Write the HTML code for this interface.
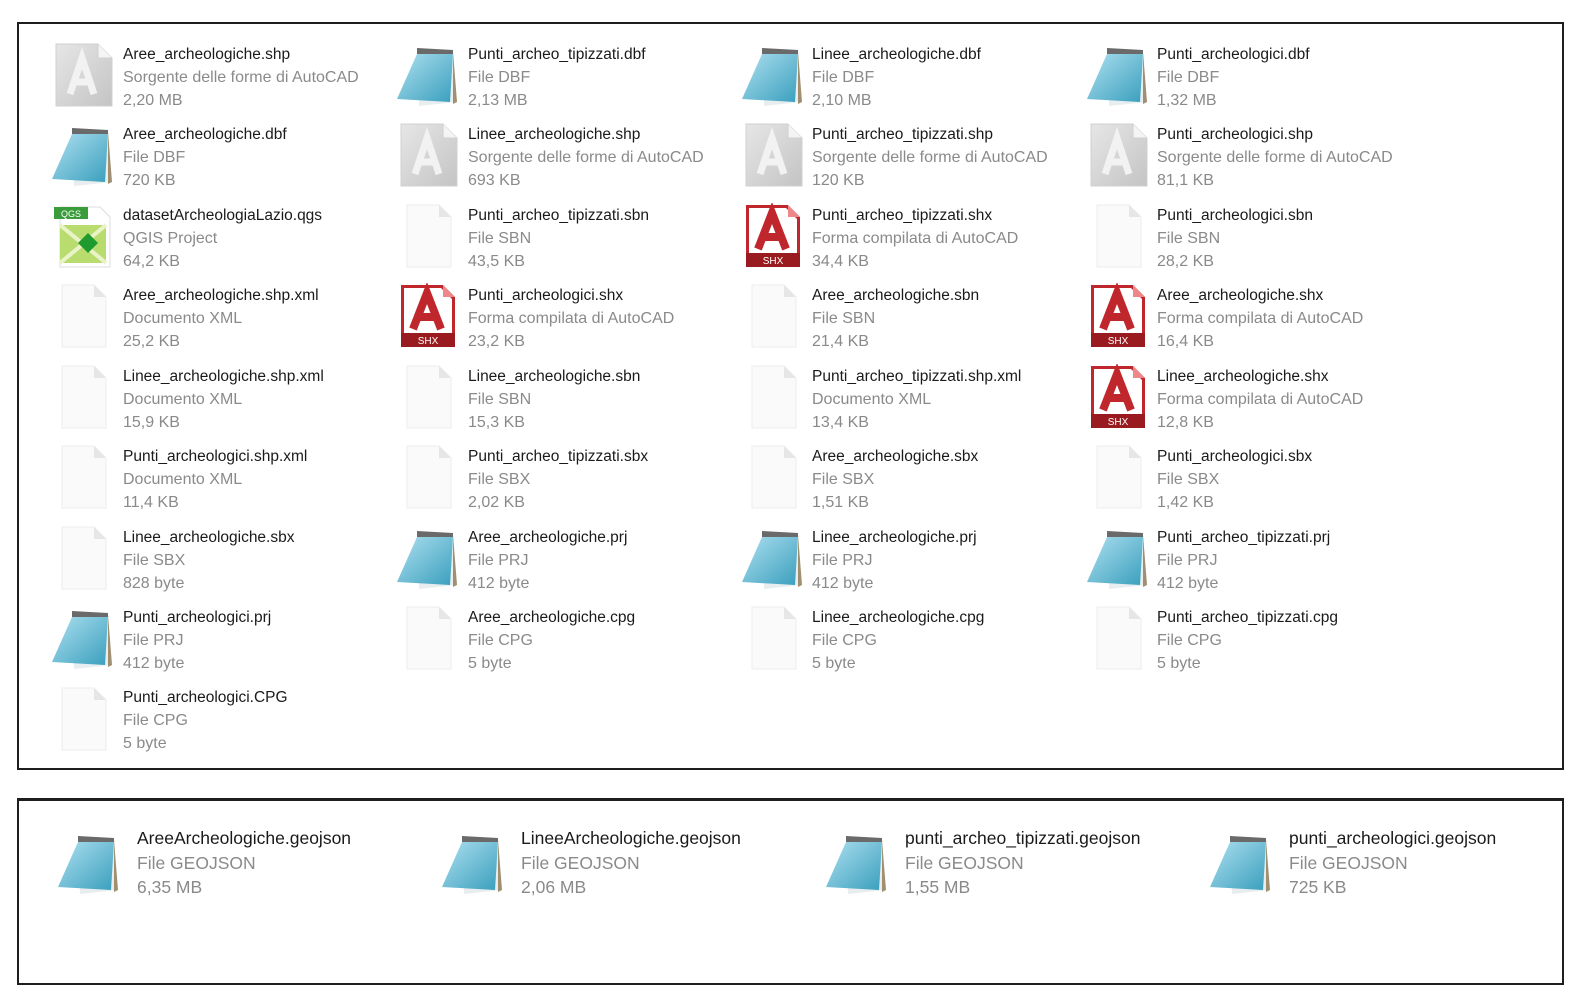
<!DOCTYPE html>
<html><head><meta charset="utf-8"><style>
body{margin:0;width:1591px;height:999px;background:#fff;position:relative;overflow:hidden;font-family:"Liberation Sans",sans-serif}
.box{position:absolute;border:2px solid #1e1e1e}
.c{position:absolute;font-size:16px;line-height:23px;white-space:nowrap;letter-spacing:0px}
.c b{font-weight:normal;color:#1a1a1a;display:block;font-size:15.5px}
.c i{font-style:normal;color:#8a8a8a;display:block}
.g .c{font-size:17.5px;line-height:24.5px}
.g .c b{font-size:17.5px}
svg.ic{position:absolute;width:64px;height:66px}
</style></head><body>
<svg width="0" height="0" style="position:absolute">
<defs>
<linearGradient id="bl" x1="0" y1="0" x2="1" y2="1"><stop offset="0" stop-color="#aee0f0"/><stop offset="1" stop-color="#3a9fbd"/></linearGradient>
<linearGradient id="gr" x1="0" y1="0" x2="1" y2="1"><stop offset="0" stop-color="#e6e6e6"/><stop offset="1" stop-color="#c4c4c4"/></linearGradient>
<symbol id="np" viewBox="0 0 64 66"><path d="M24 8 L58 10 L62 60 L24 64 Z" fill="#e8eef0"/><path d="M58 10 L62 60 L58 62 Z" fill="#a08f70"/><path d="M22 12 L58 12 L55 60 L2 57 Z" fill="url(#bl)"/><path d="M22 6 L58 8 L58 12 L22 12 Z" fill="#6a6a6a"/></symbol>
<symbol id="sh" viewBox="0 0 64 66"><path d="M6 2 H48 L62 16 V64 H6 Z" fill="url(#gr)" stroke="#d0d0d0"/><path d="M48 2 V16 H62" fill="#f4f4f4" stroke="#d0d0d0"/><path d="M20 52 L32 16 L44 52 M24 40 H40" stroke="#f2f2f2" stroke-width="7" fill="none"/></symbol>
<symbol id="bk" viewBox="0 0 64 66"><path d="M12 2 H44 L56 14 V64 H12 Z" fill="#fafafa" stroke="#ececec"/><path d="M44 2 V14 H56" fill="#e6e6e6"/></symbol>
<symbol id="sx" viewBox="0 0 64 66"><path d="M6 2 H48 L60 14 V64 H6 Z" fill="#c0272d"/><path d="M9 5 H46 L57 16 V50 H9 Z" fill="#fff"/><path d="M48 2 V14 H60" fill="#e88"/><path d="M18 46 L32 10 L46 46 M23 34 H41" stroke="#c0272d" stroke-width="8" fill="none"/><rect x="6" y="50" width="54" height="14" fill="#9a1b1f"/><text x="33" y="61" font-size="10" fill="#fff" text-anchor="middle" font-family="Liberation Sans">SHX</text></symbol>
<symbol id="qg" viewBox="0 0 64 66"><path d="M10 4 H50 L60 14 V64 H10 Z" fill="#fff" stroke="#ddd"/><rect x="10" y="22" width="46" height="38" fill="#b9dc6e"/><path d="M10 22 L56 60 M56 22 L10 60" stroke="#e8f4c8" stroke-width="4"/><path d="M38 30 L48 40 L38 50 L28 40Z" fill="#1f9a2e"/><rect x="4" y="4" width="34" height="12" fill="#3a9c3a"/><text x="21" y="14" font-size="9" fill="#fff" text-anchor="middle" font-family="Liberation Sans">QGS</text></symbol>
</defs></svg>

<div class="box" style="left:17px;top:22px;width:1543px;height:744px"></div>
<div class="box" style="left:17px;top:798px;width:1543px;height:182px;border-top-width:3px"></div>

<svg class="ic" style="left:50px;top:42px"><use href="#sh"/></svg><div class="c" style="left:123px;top:43px"><b>Aree_archeologiche.shp</b><i>Sorgente delle forme di AutoCAD</i><i>2,20 MB</i></div>
<svg class="ic" style="left:395px;top:42px"><use href="#np"/></svg><div class="c" style="left:468px;top:43px"><b>Punti_archeo_tipizzati.dbf</b><i>File DBF</i><i>2,13 MB</i></div>
<svg class="ic" style="left:740px;top:42px"><use href="#np"/></svg><div class="c" style="left:812px;top:43px"><b>Linee_archeologiche.dbf</b><i>File DBF</i><i>2,10 MB</i></div>
<svg class="ic" style="left:1085px;top:42px"><use href="#np"/></svg><div class="c" style="left:1157px;top:43px"><b>Punti_archeologici.dbf</b><i>File DBF</i><i>1,32 MB</i></div>

<svg class="ic" style="left:50px;top:122px"><use href="#np"/></svg><div class="c" style="left:123px;top:123px"><b>Aree_archeologiche.dbf</b><i>File DBF</i><i>720 KB</i></div>
<svg class="ic" style="left:395px;top:122px"><use href="#sh"/></svg><div class="c" style="left:468px;top:123px"><b>Linee_archeologiche.shp</b><i>Sorgente delle forme di AutoCAD</i><i>693 KB</i></div>
<svg class="ic" style="left:740px;top:122px"><use href="#sh"/></svg><div class="c" style="left:812px;top:123px"><b>Punti_archeo_tipizzati.shp</b><i>Sorgente delle forme di AutoCAD</i><i>120 KB</i></div>
<svg class="ic" style="left:1085px;top:122px"><use href="#sh"/></svg><div class="c" style="left:1157px;top:123px"><b>Punti_archeologici.shp</b><i>Sorgente delle forme di AutoCAD</i><i>81,1 KB</i></div>

<svg class="ic" style="left:50px;top:203px"><use href="#qg"/></svg><div class="c" style="left:123px;top:204px"><b>datasetArcheologiaLazio.qgs</b><i>QGIS Project</i><i>64,2 KB</i></div>
<svg class="ic" style="left:395px;top:203px"><use href="#bk"/></svg><div class="c" style="left:468px;top:204px"><b>Punti_archeo_tipizzati.sbn</b><i>File SBN</i><i>43,5 KB</i></div>
<svg class="ic" style="left:740px;top:203px"><use href="#sx"/></svg><div class="c" style="left:812px;top:204px"><b>Punti_archeo_tipizzati.shx</b><i>Forma compilata di AutoCAD</i><i>34,4 KB</i></div>
<svg class="ic" style="left:1085px;top:203px"><use href="#bk"/></svg><div class="c" style="left:1157px;top:204px"><b>Punti_archeologici.sbn</b><i>File SBN</i><i>28,2 KB</i></div>

<svg class="ic" style="left:50px;top:283px"><use href="#bk"/></svg><div class="c" style="left:123px;top:284px"><b>Aree_archeologiche.shp.xml</b><i>Documento XML</i><i>25,2 KB</i></div>
<svg class="ic" style="left:395px;top:283px"><use href="#sx"/></svg><div class="c" style="left:468px;top:284px"><b>Punti_archeologici.shx</b><i>Forma compilata di AutoCAD</i><i>23,2 KB</i></div>
<svg class="ic" style="left:740px;top:283px"><use href="#bk"/></svg><div class="c" style="left:812px;top:284px"><b>Aree_archeologiche.sbn</b><i>File SBN</i><i>21,4 KB</i></div>
<svg class="ic" style="left:1085px;top:283px"><use href="#sx"/></svg><div class="c" style="left:1157px;top:284px"><b>Aree_archeologiche.shx</b><i>Forma compilata di AutoCAD</i><i>16,4 KB</i></div>

<svg class="ic" style="left:50px;top:364px"><use href="#bk"/></svg><div class="c" style="left:123px;top:365px"><b>Linee_archeologiche.shp.xml</b><i>Documento XML</i><i>15,9 KB</i></div>
<svg class="ic" style="left:395px;top:364px"><use href="#bk"/></svg><div class="c" style="left:468px;top:365px"><b>Linee_archeologiche.sbn</b><i>File SBN</i><i>15,3 KB</i></div>
<svg class="ic" style="left:740px;top:364px"><use href="#bk"/></svg><div class="c" style="left:812px;top:365px"><b>Punti_archeo_tipizzati.shp.xml</b><i>Documento XML</i><i>13,4 KB</i></div>
<svg class="ic" style="left:1085px;top:364px"><use href="#sx"/></svg><div class="c" style="left:1157px;top:365px"><b>Linee_archeologiche.shx</b><i>Forma compilata di AutoCAD</i><i>12,8 KB</i></div>

<svg class="ic" style="left:50px;top:444px"><use href="#bk"/></svg><div class="c" style="left:123px;top:445px"><b>Punti_archeologici.shp.xml</b><i>Documento XML</i><i>11,4 KB</i></div>
<svg class="ic" style="left:395px;top:444px"><use href="#bk"/></svg><div class="c" style="left:468px;top:445px"><b>Punti_archeo_tipizzati.sbx</b><i>File SBX</i><i>2,02 KB</i></div>
<svg class="ic" style="left:740px;top:444px"><use href="#bk"/></svg><div class="c" style="left:812px;top:445px"><b>Aree_archeologiche.sbx</b><i>File SBX</i><i>1,51 KB</i></div>
<svg class="ic" style="left:1085px;top:444px"><use href="#bk"/></svg><div class="c" style="left:1157px;top:445px"><b>Punti_archeologici.sbx</b><i>File SBX</i><i>1,42 KB</i></div>

<svg class="ic" style="left:50px;top:525px"><use href="#bk"/></svg><div class="c" style="left:123px;top:526px"><b>Linee_archeologiche.sbx</b><i>File SBX</i><i>828 byte</i></div>
<svg class="ic" style="left:395px;top:525px"><use href="#np"/></svg><div class="c" style="left:468px;top:526px"><b>Aree_archeologiche.prj</b><i>File PRJ</i><i>412 byte</i></div>
<svg class="ic" style="left:740px;top:525px"><use href="#np"/></svg><div class="c" style="left:812px;top:526px"><b>Linee_archeologiche.prj</b><i>File PRJ</i><i>412 byte</i></div>
<svg class="ic" style="left:1085px;top:525px"><use href="#np"/></svg><div class="c" style="left:1157px;top:526px"><b>Punti_archeo_tipizzati.prj</b><i>File PRJ</i><i>412 byte</i></div>

<svg class="ic" style="left:50px;top:605px"><use href="#np"/></svg><div class="c" style="left:123px;top:606px"><b>Punti_archeologici.prj</b><i>File PRJ</i><i>412 byte</i></div>
<svg class="ic" style="left:395px;top:605px"><use href="#bk"/></svg><div class="c" style="left:468px;top:606px"><b>Aree_archeologiche.cpg</b><i>File CPG</i><i>5 byte</i></div>
<svg class="ic" style="left:740px;top:605px"><use href="#bk"/></svg><div class="c" style="left:812px;top:606px"><b>Linee_archeologiche.cpg</b><i>File CPG</i><i>5 byte</i></div>
<svg class="ic" style="left:1085px;top:605px"><use href="#bk"/></svg><div class="c" style="left:1157px;top:606px"><b>Punti_archeo_tipizzati.cpg</b><i>File CPG</i><i>5 byte</i></div>

<svg class="ic" style="left:50px;top:686px"><use href="#bk"/></svg><div class="c" style="left:123px;top:686px"><b>Punti_archeologici.CPG</b><i>File CPG</i><i>5 byte</i></div>

<div class="g">
<svg class="ic" style="left:56px;top:830px"><use href="#np"/></svg><div class="c" style="left:137px;top:826px"><b>AreeArcheologiche.geojson</b><i>File GEOJSON</i><i>6,35 MB</i></div>
<svg class="ic" style="left:440px;top:830px"><use href="#np"/></svg><div class="c" style="left:521px;top:826px"><b>LineeArcheologiche.geojson</b><i>File GEOJSON</i><i>2,06 MB</i></div>
<svg class="ic" style="left:824px;top:830px"><use href="#np"/></svg><div class="c" style="left:905px;top:826px"><b>punti_archeo_tipizzati.geojson</b><i>File GEOJSON</i><i>1,55 MB</i></div>
<svg class="ic" style="left:1208px;top:830px"><use href="#np"/></svg><div class="c" style="left:1289px;top:826px"><b>punti_archeologici.geojson</b><i>File GEOJSON</i><i>725 KB</i></div>
</div>
</body></html>
